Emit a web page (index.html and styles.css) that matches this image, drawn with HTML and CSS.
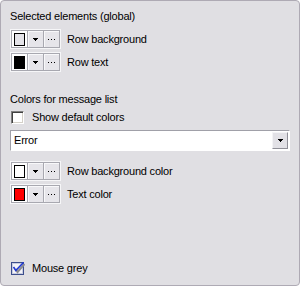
FILE: index.html
```html
<!DOCTYPE html>
<html>
<head>
<meta charset="utf-8">
<link rel="stylesheet" href="styles.css">
</head>
<body>
<div class="panel">
  <div class="heading">Selected elements (global)</div>
  <div class="color-row first">
    <div class="picker">
      <div class="swatch-cell"><span class="swatch sw-light"></span></div>
      <div class="pbtn"><svg class="arrow" width="5" height="3" viewBox="0 0 5 3"><path d="M0 0h5v1h-5zM1 1h3v1h-3zM2 2h1v1h-1z" fill="#000"/></svg></div>
      <div class="pbtn"><span class="dots"><i></i><i></i><i></i></span></div>
    </div>
    <span class="label">Row background</span>
  </div>
  <div class="color-row">
    <div class="picker">
      <div class="swatch-cell"><span class="swatch sw-black"></span></div>
      <div class="pbtn"><svg class="arrow" width="5" height="3" viewBox="0 0 5 3"><path d="M0 0h5v1h-5zM1 1h3v1h-3zM2 2h1v1h-1z" fill="#000"/></svg></div>
      <div class="pbtn"><span class="dots"><i></i><i></i><i></i></span></div>
    </div>
    <span class="label">Row text</span>
  </div>

  <div class="heading second">Colors for message list</div>
  <label class="check-row">
    <span class="checkbox"></span>
    <span class="label">Show default colors</span>
  </label>
  <div class="select">
    <span class="select-text">Error</span>
    <span class="select-btn"><svg class="arrow" width="5" height="3" viewBox="0 0 5 3"><path d="M0 0h5v1h-5zM1 1h3v1h-3zM2 2h1v1h-1z" fill="#000"/></svg></span>
  </div>
  <div class="color-row first2">
    <div class="picker">
      <div class="swatch-cell"><span class="swatch sw-white"></span></div>
      <div class="pbtn"><svg class="arrow" width="5" height="3" viewBox="0 0 5 3"><path d="M0 0h5v1h-5zM1 1h3v1h-3zM2 2h1v1h-1z" fill="#000"/></svg></div>
      <div class="pbtn"><span class="dots"><i></i><i></i><i></i></span></div>
    </div>
    <span class="label">Row background color</span>
  </div>
  <div class="color-row">
    <div class="picker">
      <div class="swatch-cell"><span class="swatch sw-red"></span></div>
      <div class="pbtn"><svg class="arrow" width="5" height="3" viewBox="0 0 5 3"><path d="M0 0h5v1h-5zM1 1h3v1h-3zM2 2h1v1h-1z" fill="#000"/></svg></div>
      <div class="pbtn"><span class="dots"><i></i><i></i><i></i></span></div>
    </div>
    <span class="label">Text color</span>
  </div>

  <label class="check-row bottom">
    <svg class="checked" width="14" height="13" viewBox="0 0 14 13">
      <rect x="0.5" y="0.5" width="12" height="12" fill="#f4f4f8" stroke="#3c4e8c"/>
      <rect x="1.5" y="1.5" width="10" height="10" fill="none" stroke="#c8cce0"/>
      <path d="M4.5 7 L6.5 10 L13.5 2" fill="none" stroke="#8c8c90" stroke-width="2"/>
      <path d="M2.5 5 L4.8 8.5 L12.5 0.5" fill="none" stroke="#2038d0" stroke-width="1.6"/>
    </svg>
    <span class="label">Mouse grey</span>
  </label>
</div>
</body>
</html>
```

FILE: styles.css
```css
html, body {
  margin: 0;
  padding: 0;
  background: #ffffff;
}

.panel {
  width: 300px;
  height: 286px;
  box-sizing: border-box;
  border: 1px solid #aeaab4;
  border-radius: 4px;
  background: #e0dfe3;
  padding: 9px 9px 10px 9px;
  display: flex;
  flex-direction: column;
  font-family: "Liberation Sans", Arial, sans-serif;
  font-size: 11px;
  letter-spacing: -0.2px;
  color: #000;
}

.heading {
  line-height: 13px;
  height: 13px;
}

.heading.second {
  margin-top: 21px;
}

.color-row {
  display: flex;
  align-items: center;
  margin-top: 3px;
}

.color-row.first {
  margin-top: 6px;
}

.color-row.first2 {
  margin-top: 10px;
}

.picker {
  display: flex;
  height: 20px;
  box-sizing: border-box;
  border: 1px solid #f6f6f8;
}

.swatch-cell {
  width: 17px;
  height: 18px;
  box-sizing: border-box;
  border: 1px solid #a8a8b0;
  background: #ffffff;
  display: flex;
  align-items: center;
  justify-content: center;
}

.swatch {
  display: block;
  width: 11px;
  height: 13px;
  box-sizing: border-box;
  border: 1px solid #000;
}

.sw-light { background: #e4e3e8; }
.sw-black { background: #000000; }
.sw-white { background: #ffffff; }
.sw-red { background: #ff0000; }

.pbtn {
  width: 16px;
  height: 18px;
  box-sizing: border-box;
  border: 1px solid #a8a8b0;
  border-left: none;
  background: #e6e5ea;
  box-shadow: inset 1px 1px 0 #f8f8fa;
  display: flex;
  align-items: center;
  justify-content: center;
}

.arrow {
  display: block;
}

.dots {
  display: flex;
  gap: 2px;
}

.dots i {
  display: block;
  width: 1px;
  height: 1px;
  background: #000;
}

.label {
  margin-left: 6px;
  line-height: 13px;
}

.check-row {
  display: flex;
  align-items: center;
  margin-top: 5px;
  padding-left: 1px;
}

.check-row .label {
  margin-left: 8px;
}

.check-row.bottom .label {
  margin-left: 7px;
}

.checkbox {
  display: block;
  width: 13px;
  height: 13px;
  box-sizing: border-box;
  background: #fff;
  border-top: 1px solid #808080;
  border-left: 1px solid #808080;
  border-right: 1px solid #ffffff;
  border-bottom: 1px solid #ffffff;
  box-shadow: inset 1px 1px 0 #404040, inset -1px -1px 0 #d4d0c8;
}

.select {
  margin-top: 6px;
  height: 21px;
  box-sizing: border-box;
  border-top: 1px solid #a0a0a8;
  border-left: 1px solid #a0a0a8;
  border-right: 1px solid #ffffff;
  border-bottom: 1px solid #ffffff;
  background: #ffffff;
  padding: 1px;
  display: flex;
  align-items: center;
}

.select-text {
  flex: 1;
  padding-left: 2px;
  line-height: 13px;
}

.select-btn {
  width: 16px;
  height: 17px;
  box-sizing: border-box;
  background: #e2e1e6;
  border-right: 1px solid #909098;
  border-bottom: 1px solid #909098;
  border-top: 1px solid #f4f4f6;
  border-left: 1px solid #f4f4f6;
  display: flex;
  align-items: center;
  justify-content: center;
}

.check-row.bottom {
  margin-top: auto;
}

.checked {
  display: block;
}
```
